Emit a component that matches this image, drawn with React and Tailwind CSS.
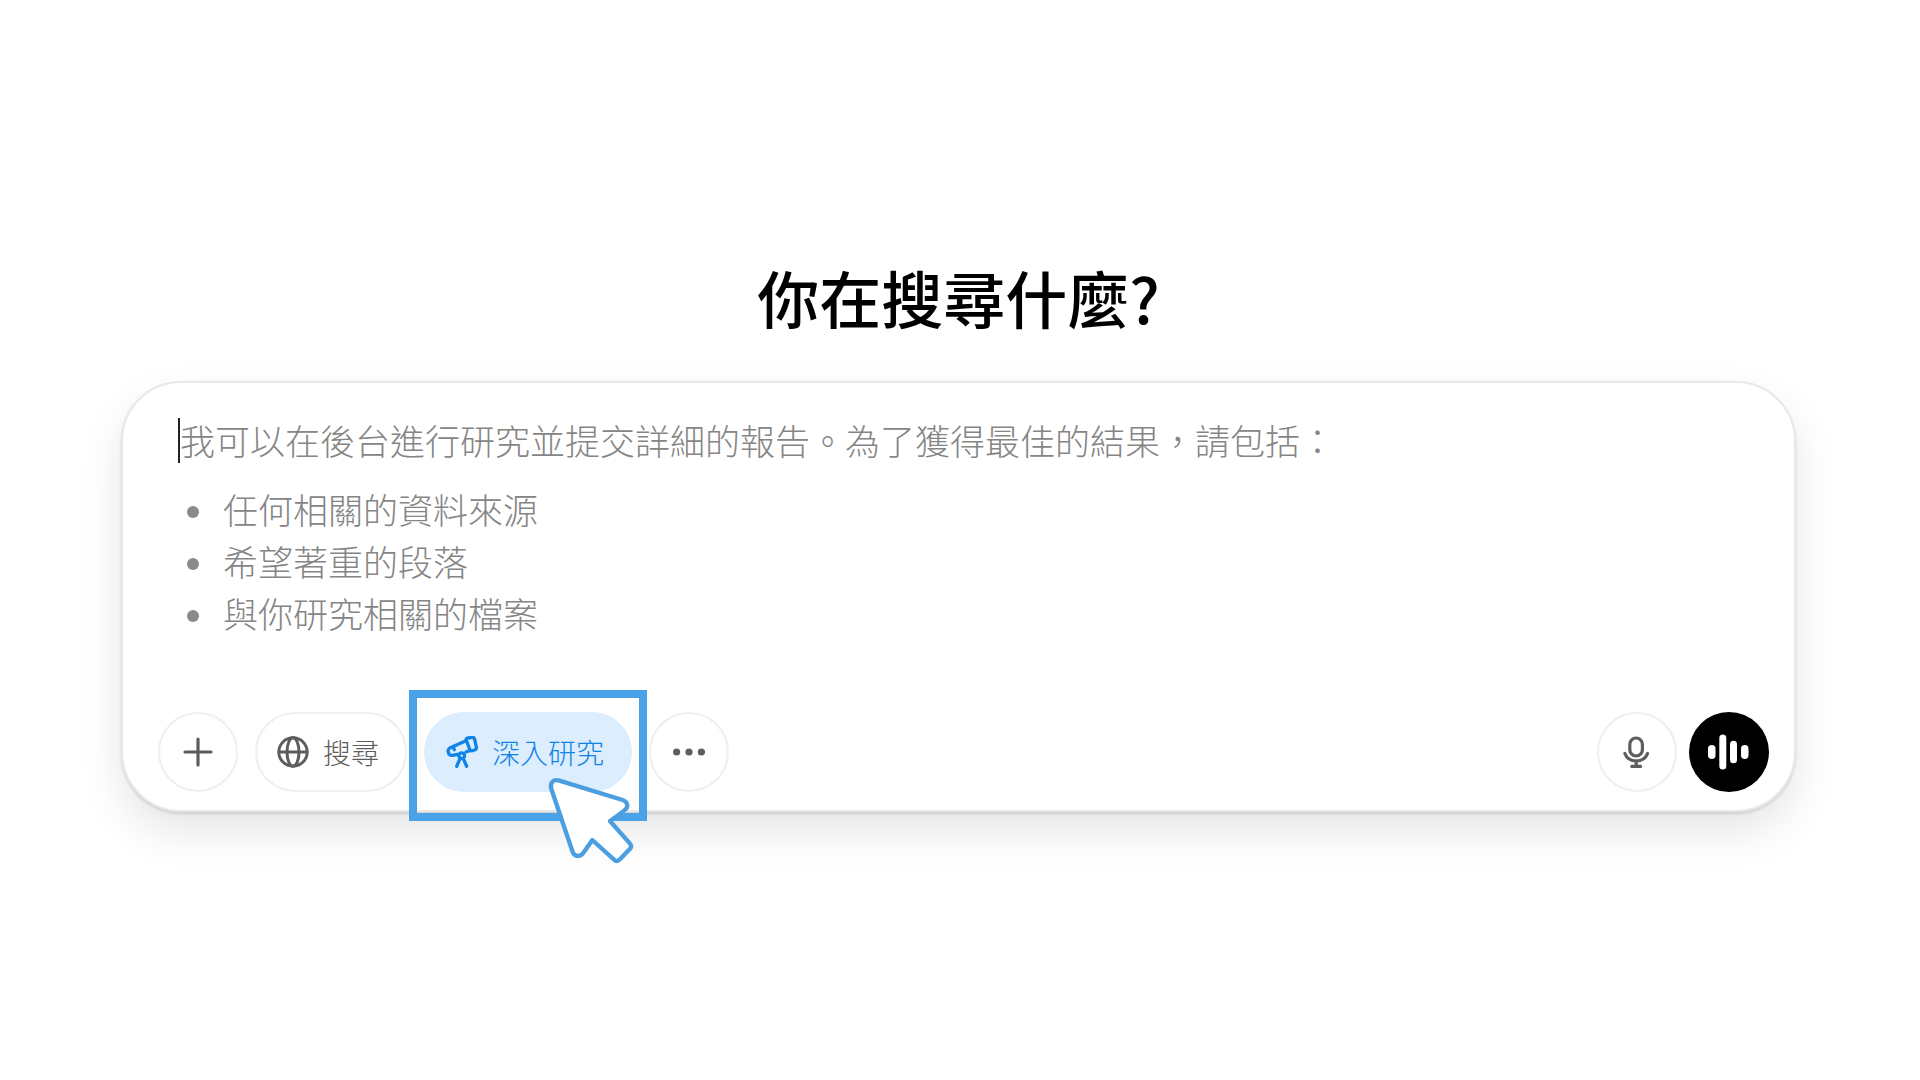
import React, { useState } from 'react';

const SUGGESTIONS = ['任何相關的資料來源', '希望著重的段落', '與你研究相關的檔案'];

function PlusIcon() {
  return (
    <svg className="size-8" viewBox="0 0 32 32" fill="none" stroke="currentColor" strokeWidth="3.2" strokeLinecap="round">
      <path d="M16 3v26M3 16h26" />
    </svg>
  );
}

function GlobeIcon() {
  return (
    <svg className="size-8 shrink-0" viewBox="0 0 32 32" fill="none" stroke="currentColor" strokeWidth="3">
      <circle cx="16" cy="16" r="14.2" />
      <ellipse cx="16" cy="16" rx="6" ry="14.2" />
      <path d="M2 16h28" />
    </svg>
  );
}

function TelescopeIcon() {
  return (
    <svg
      className="size-8 shrink-0"
      viewBox="0 0 96 96"
      fill="none"
      stroke="currentColor"
      strokeWidth="10"
      strokeLinecap="round"
      strokeLinejoin="round"
    >
      <path d="M61 13Q59 7 66 6L77 4Q84 3 86 10L91 33Q92 40 86 42L79 44Q73 45 71 39Z" />
      <path d="M60 14L13 35Q4 40 7 49Q10 60 20 58L34 55" />
      <path d="M71 44L60 48" />
      <path d="M22 34L25 41" />
      <circle cx="47" cy="59" r="8.5" />
      <path d="M42 68L32 91M52 68L62 91" />
    </svg>
  );
}

function DotsIcon() {
  return (
    <svg className="size-8" viewBox="0 0 32 32" fill="currentColor">
      <circle cx="3.6" cy="16" r="3.6" />
      <circle cx="16" cy="16" r="3.6" />
      <circle cx="28.4" cy="16" r="3.6" />
    </svg>
  );
}

function MicIcon() {
  return (
    <svg className="size-8" viewBox="0 0 32 32" fill="none" stroke="currentColor" strokeWidth="3.2" strokeLinecap="round">
      <rect x="8.8" y="2" width="12.6" height="18" rx="6.3" />
      <path d="M3.8 17.4C5.6 22 10 25 15.2 25s9.6-3 11.4-7.6" />
      <path d="M15.2 25v5M10.8 30.4h8.8" />
    </svg>
  );
}

function VoiceIcon() {
  return (
    <svg className="size-10 overflow-visible" viewBox="0 0 40 40" fill="currentColor">
      <rect x="-1" y="13" width="7.5" height="14" rx="3.7" />
      <rect x="10.3" y="2.5" width="7" height="35" rx="3.5" />
      <rect x="21" y="8.8" width="7" height="22.4" rx="3.5" />
      <rect x="32" y="13" width="7.5" height="14" rx="3.7" />
    </svg>
  );
}

function PointerIcon() {
  return (
    <svg className="w-[110px] h-[100px]" viewBox="0 0 330 300" fill="#fff" stroke="#4b9fe1" strokeWidth="13" strokeLinejoin="round">
      <path d="M34 57C29 39 39 26 58 32L248 90C262 95 266 108 257 118C250 125 242 131 210 153L270 221Q277 229 270 236L240 268Q231 277 222 269L157 210L132 246C123 262 104 262 98 246Z" />
    </svg>
  );
}

function RoundButton({ label, children }) {
  return (
    <button
      type="button"
      aria-label={label}
      className="size-20 shrink-0 flex items-center justify-center rounded-full border-2 border-[#efefef] text-[#5d5d5d]"
    >
      {children}
    </button>
  );
}

export default function App() {
  const [prompt, setPrompt] = useState('');

  return (
    <main
      lang="zh-Hant"
      className="min-h-screen bg-white pt-[253px] pl-[121px] pr-[124px] font-['Noto_Sans_CJK_TC',sans-serif]"
    >
      <h1 className="text-center text-[62px] leading-[88px] font-medium text-black">你在搜尋什麼?</h1>

      <form
        className="mt-10 rounded-[60px] border-2 border-[#e8e8e8] bg-white pt-[31px] pb-[18px] pl-[35px] pr-[25px] shadow-[0_20px_44px_rgba(0,0,0,0.1),0_2px_3px_rgba(0,0,0,0.12)]"
        onSubmit={(e) => e.preventDefault()}
      >
        <div className="grid pl-5 text-[35px] leading-[52px] font-light">
          <textarea
            aria-label="研究內容"
            className="col-start-1 row-start-1 resize-none bg-transparent text-[#222] outline-none"
            value={prompt}
            onChange={(e) => setPrompt(e.target.value)}
          />
          {/* Rich placeholder, sits on top of the empty textarea */}
          {!prompt && (
            <div className="col-start-1 row-start-1 pointer-events-none text-[#858585]">
              <div className="flex items-center">
                <span className="w-[2px] h-[45px] bg-[#222]" />
                <p>我可以在後台進行研究並提交詳細的報告。為了獲得最佳的結果，請包括：</p>
              </div>
              <ul className="mt-[17px] pl-[9px]">
                {SUGGESTIONS.map((item) => (
                  <li key={item} className="flex items-center gap-6">
                    <span className="mt-1.5 size-3 rounded-full bg-[#8a8a8a]" />
                    {item}
                  </li>
                ))}
              </ul>
            </div>
          )}
        </div>

        <div className="mt-[73px] flex items-center justify-between">
          <div className="flex items-center gap-[17px]">
            <RoundButton label="新增">
              <PlusIcon />
            </RoundButton>
            <button
              type="button"
              className="h-20 flex items-center gap-3.5 rounded-full border-2 border-[#efefef] pl-5 pr-[26px] text-[28px] text-[#5d5d5d] font-light"
            >
              <GlobeIcon />
              搜尋
            </button>

            <div className="relative">
              <button
                type="button"
                className="h-20 flex items-center gap-3.5 rounded-full bg-[#dcedfd] pl-[22px] pr-7 text-[28px] text-[#0f83e8] font-light"
              >
                <TelescopeIcon />
                深入研究
              </button>
              {/* Highlight frame and pointer */}
              <div className="absolute -inset-x-[15px] -top-[22px] -bottom-[29px] border-8 border-[#4aa3e8] pointer-events-none" />
              <div className="absolute left-[116px] top-[58px] z-10 pointer-events-none">
                <PointerIcon />
              </div>
            </div>

            <RoundButton label="更多">
              <DotsIcon />
            </RoundButton>
          </div>

          <div className="flex items-center gap-3">
            <RoundButton label="語音輸入">
              <MicIcon />
            </RoundButton>
            <button
              type="button"
              aria-label="語音模式"
              className="size-20 shrink-0 flex items-center justify-center rounded-full bg-black text-white"
            >
              <VoiceIcon />
            </button>
          </div>
        </div>
      </form>
    </main>
  );
}
